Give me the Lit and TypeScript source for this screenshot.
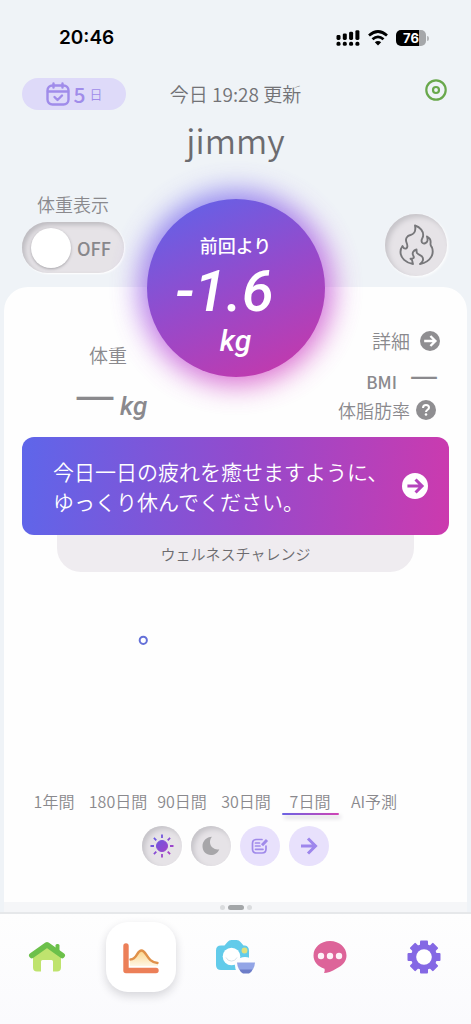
import { LitElement, html, css, svg } from "lit";
import { customElement, state } from "lit/decorators.js";
import { classMap } from "lit/directives/class-map.js";

const arrow = svg`<path d="M5 12h13M12.5 6l6 6-6 6" fill="none" stroke="currentColor" stroke-width="2.8"/>`;

const houseIcon = html`<svg width="38" height="34" viewBox="0 0 38 34" aria-hidden="true">
  <path d="M5 17 19 7l14 10v10.500q0 4-4 4h-4V21.500q0-1.500-1.500-1.500h-9Q13 20 13 21.500v10H9q-4 0-4-4z" fill="#bfe36e"/>
  <path d="M27.500 5.500q0-1.500 1.500-1.500h1q1.500 0 1.500 1.500V13h-4z" fill="#6cc04a"/>
  <path d="M3.800 15.500 19 4.800l15.200 10.700" fill="none" stroke="#6cc04a" stroke-width="5.600" stroke-linecap="round" stroke-linejoin="round"/>
</svg>`;

const chartIcon = html`<svg width="38" height="34" viewBox="0 0 38 34" aria-hidden="true">
  <defs><linearGradient id="hill" x1="0" y1="0" x2="0" y2="1">
    <stop offset="0" stop-color="#fbd488"/><stop offset="1" stop-color="#fff6e4"/>
  </linearGradient></defs>
  <path d="M8 20.500c8 0 6-10 11.500-10s5 12 16.500 12.500V26H8z" fill="url(#hill)"/>
  <path d="M8.500 19.500c7 0 6-9 11-9s5.500 12 16 12.500" fill="none" stroke="#e0914a" stroke-width="2.400" stroke-linecap="round"/>
  <path d="M4 6v24.500h30" fill="none" stroke="#ec7f58" stroke-width="5.400" stroke-linecap="round" stroke-linejoin="round"/>
</svg>`;

const cameraIcon = html`<svg width="40" height="36" viewBox="0 0 40 36" aria-hidden="true">
  <path d="M6 6.500h3.500L12.500 3q1.500-2 4-2h5q2.500 0 4 2l3 3.500h1.500Q34 7 34 12v14q0 5-5 5H6q-5 0-5-5V11.500q0-5 5-5z" fill="#62cbea"/>
  <circle cx="16.500" cy="17.500" r="8.800" fill="#fff"/>
  <path d="M11 18.500a6 6 0 0 0 11 0" fill="none" stroke="#d9e3ea" stroke-width="1"/>
  <circle cx="29.500" cy="11.500" r="2.900" fill="#dfe07e"/>
  <path d="M20 22q10-8 20 0v14H24q-5-5-4-14z" fill="#fdfdfe"/>
  <path d="M22 23.500h18q-.5 7-5.500 10h-7q-5-3-5.500-10z" fill="#93a5e6"/>
  <path d="M24.500 30.500h13q-1 3-3.500 4h-6q-2.500-1-3.500-4z" fill="#6d7dc8"/>
</svg>`;

const chatIcon = html`<svg width="34" height="34" viewBox="0 0 34 34" aria-hidden="true">
  <path d="M17 1C7.500 1 .5 7.500.5 15.500c0 6 4 11 11 13.200.4 1.800.2 3-.5 4.300 3 0 8-1.500 12.500-4.500C30 25.500 33.500 21 33.500 15.500 33.500 7.500 26.500 1 17 1z" fill="#dd6499"/>
  <circle cx="8" cy="16" r="3.200" fill="#fdf3f8"/><circle cx="17" cy="16" r="3.200" fill="#fdf3f8"/><circle cx="26" cy="16" r="3.200" fill="#fdf3f8"/>
</svg>`;

const gearIcon = html`<svg width="34" height="34" viewBox="-17 -17 34 34" aria-hidden="true">
  <g fill="#8468e4">
    ${[0, 45, 90, 135].map(a => svg`<rect x="-4" y="-16.500" width="8" height="33" rx="1" transform="rotate(${a})"/>`)}
    <circle r="13"/>
  </g>
  <circle r="7.800" fill="#fff"/>
</svg>`;

const flameIcon = html`<svg width="37" height="42" viewBox="0 0 37 42" aria-hidden="true">
  <path d="M15 40C8 39 2.500 34 2.500 28c0-2 .5-4 2-6 .8 2 2 3 3.500 2.500 2.500-1 1.500-3.500.5-6C7 15 9 11.500 12.500 11c4-1 5.500-4.500 4.500-9.500C22 3 26 7.500 25 12.500c-.5 2.500-2.500 3.500-1 6 1.500 1.800 5 .8 5.500-2 .2-1.500 0-2.500-.5-4 3 1.500 4 4 3.500 7-.3 1.500.5 2.500 1.500 4C36 29 34 37.500 22 40c3-2 4-5 2-7.500-1.500-1.500-4-2-5-3.500-.5-1-.5-2-.5-3.500-3 1-4.500 3-3.500 5.500.5 1.500 1.500 2 .5 3-1 .8-2 .8-3 .8 3 1 1.500 3.500 2.500 5.200z"
    fill="none" stroke="#77777a" stroke-width="1.900" stroke-linejoin="round" stroke-linecap="round"/>
</svg>`;

const sunIcon = html`<svg width="24" height="24" viewBox="-12 -12 24 24" aria-hidden="true">
  <defs><linearGradient id="sun" gradientUnits="userSpaceOnUse" x1="-11" y1="-11" x2="11" y2="11">
    <stop offset="0" stop-color="#5b5fe8"/><stop offset="1" stop-color="#b53cc0"/>
  </linearGradient></defs>
  <g fill="url(#sun)" stroke="url(#sun)">
    <circle r="5.500"/>
    <path d="M0-11.500.01-8M0 8l.01 3.500M-11.500 0-8 .01M8 0l3.500.01M-8.100-8.100l2.400 2.400M5.700 5.700l2.400 2.400M-8.100 8.100l2.400-2.400M5.700-5.700l2.400-2.400" stroke-width="1.800"/>
  </g>
</svg>`;

const moonIcon = html`<svg width="20" height="20" viewBox="0 0 20 20" aria-hidden="true">
  <path d="M11 .8C8 4 8.500 9 11.500 11.500c2 1.800 4.500 2.300 6.800 1.700C17 17 13.500 19 10 19 5 19 1.500 15 1.500 10.200 1.500 5 5.500 1 11 .8z" fill="#a7a6a9"/>
</svg>`;

const noteIcon = html`<svg width="18" height="18" viewBox="0 0 18 18" aria-hidden="true">
  <g fill="none" stroke="#a08aea" stroke-width="1.700" stroke-linecap="round">
    <path d="M11 2.500H5.500Q1.500 2.500 1.500 6.500v5.500q0 4 4 4h5.500q4 0 4-4V9"/>
    <path d="M4.500 6h4M4.500 9h4.500M4.500 12.300h7.500"/>
    <path d="m11 8.300 5-5.300" stroke-width="3" stroke-linecap="butt"/>
  </g>
</svg>`;

const calendarIcon = html`<svg width="24" height="24" viewBox="0 0 24 24" aria-hidden="true">
  <g fill="none" stroke="#a08cea" stroke-width="2.400" stroke-linecap="round" stroke-linejoin="round">
    <rect x="1.500" y="3.500" width="21" height="19" rx="5"/>
    <path d="M2 9.500h20M7.500 1.500v4M16.500 1.500v4M8.500 15l3 3 4.500-4.500"/>
  </g>
</svg>`;

@customElement("app-root")
export class AppRoot extends LitElement {
  @state() private range = "7日間";
  @state() private shown = false;

  private ranges = ["1年間", "180日間", "90日間", "30日間", "7日間", "AI予測"];
  private tabs = [
    { label: "ホーム", icon: houseIcon },
    { label: "グラフ", icon: chartIcon },
    { label: "食事", icon: cameraIcon },
    { label: "チャット", icon: chatIcon },
    { label: "設定", icon: gearIcon },
  ];

  static styles = css`
    :host {
      display: flex;
      flex-direction: column;
      min-height: 100vh;
      background: #eff3f7;
      color: #8a898d;
      font-family: "Noto Sans CJK JP", "Noto Sans", sans-serif;
      font-weight: 350;
    }
    * { box-sizing: border-box; }
    svg { display: block; flex: none; }
    button { border: 0; padding: 0; background: none; color: inherit; font: inherit; cursor: pointer; }
    h1, p { margin: 0; font-weight: 350; }

    .status { display: flex; align-items: center; justify-content: space-between; height: 76px; padding: 0 42px 0 59px; color: #000; }
    .clock { font: 600 19px/24px Inter, sans-serif; }
    .signals { display: flex; align-items: center; gap: 8px; }
    .battery { display: flex; align-items: center; gap: 1px; }
    .level { width: 30px; height: 16px; border-radius: 5px; background: linear-gradient(90deg, #000 76%, #a5a7aa 76%); color: #fff; font: 700 13px/16px Inter, sans-serif; text-align: center; }
    .cap { width: 2px; height: 5px; border-radius: 0 2px 2px 0; background: #b5b7ba; }

    .top { display: grid; grid-template-columns: 104px 1fr 104px; align-items: center; padding: 2px 22px 0; }
    .days { display: flex; align-items: center; justify-content: center; gap: 4px; height: 32px; border-radius: 16px; background: #dedaf9; color: #a08cea; }
    .count { font-size: 21px; font-weight: 500; line-height: 32px; }
    .unit { font-size: 13px; line-height: 32px; }
    .updated { font-size: 19px; line-height: 32px; text-align: center; white-space: nowrap; color: #727276; }
    .target { justify-self: end; margin: 0 2px 8px 0; }
    .name { font-size: 34px; line-height: 52px; margin-top: 4px; text-align: center; color: #6c6b6f; }

    .controls { display: flex; justify-content: space-between; align-items: flex-end; padding: 22px 24px 0 22px; height: 107px; }
    .display { display: grid; justify-items: center; width: 102px; font-size: 18px; line-height: 24px; }
    .caption { grid-area: 1 / 1; white-space: nowrap; margin-bottom: 6px; }
    .track { grid-area: 2 / 1; appearance: none; margin: 0; width: 102px; height: 51px; padding: 6px 9px; border-radius: 26px; background: #e6e3e7; box-shadow: inset 3px 3px 5px #bdbbc0, 1px 1px 2px #fff; cursor: pointer; }
    .track::before { content: ""; display: block; width: 40px; height: 40px; border-radius: 50%; background: #fff; box-shadow: 0 1px 3px #a5a3a8; }
    .track:checked::before { margin-left: 44px; }
    .word { grid-area: 2 / 1; justify-self: end; align-self: center; padding-right: 13px; font-weight: 500; pointer-events: none; color: #88878b; }
    .word.on { justify-self: start; padding: 0 0 0 14px; }
    .round { display: grid; place-items: center; border-radius: 50%; background: #e6e3e7; box-shadow: inset 3px 3px 5px #c6c4c9, 1px 1px 3px #fff; }
    .flame { width: 62px; height: 62px; margin-bottom: -3px; }

    .card { position: relative; flex: 1; display: flex; flex-direction: column; margin: 14px 4px 0; border-radius: 24px 24px 0 0; background: #fefefe; padding: 0 18px; }
    .orb { position: absolute; top: -88px; left: 50%; width: 178px; height: 178px; transform: translateX(-50%); isolation: isolate; display: flex; flex-direction: column; align-items: center; border-radius: 50%; padding-top: 32px; color: #fff; font-weight: 500; }
    .orb::before { content: ""; position: absolute; inset: -8px; z-index: -2; border-radius: 50%; background: linear-gradient(155deg, #6262f0 10%, #b44adb 55%, #d638b8 90%); filter: blur(14px); opacity: 0.75; }
    .orb::after { content: ""; position: absolute; inset: 0; z-index: -1; border-radius: 50%; background: linear-gradient(155deg, #6262e8 5%, #964acb 50%, #c638aa 95%); }
    .since { font-size: 18px; line-height: 28px; }
    .change, .kg, .small { font-family: Roboto, sans-serif; font-style: italic; font-weight: 500; }
    .change { font-size: 58px; line-height: 64px; padding-right: 22px; }
    .kg { font-size: 30px; line-height: 36px; }

    .facts { display: flex; justify-content: space-between; height: 150px; }
    .weight { display: flex; flex-direction: column; align-items: center; padding: 53px 0 0 53px; font-size: 19px; line-height: 30px; }
    .heading { padding-right: 6px; }
    .reading { display: flex; align-items: flex-start; gap: 5px; margin-top: 18px; }
    .dash, .nodata { font-family: "Noto Sans", sans-serif; font-weight: 400; }
    .dash { font-size: 40px; line-height: 12px; }
    .small { font-size: 26px; line-height: 36px; }
    .body { display: flex; flex-direction: column; align-items: flex-end; padding: 40px 13px 0 0; font-size: 18px; }
    .row { display: flex; align-items: center; gap: 6px; line-height: 28px; }
    .detail { gap: 10px; margin: 0 -4px 13px 0; font-size: 19px; }
    .bmi { gap: 13px; margin-right: -2px; font-size: 17px; font-weight: 500; }
    .nodata { font-size: 28px; line-height: 12px; margin-bottom: 16px; }

    .banner { display: flex; align-items: center; justify-content: space-between; gap: 12px; position: relative; min-height: 98px; padding: 0 21px 0 31px; border-radius: 12px; background: linear-gradient(95deg, #5e66ea, #954acc 52%, #cc3aae); color: #fff; font-size: 21px; line-height: 30px; text-align: left; }
    .challenge { margin: 0 35px; height: 37px; border-radius: 0 0 24px 24px; background: #efecf0; color: #6c6b6f; font-size: 15px; line-height: 37px; text-align: center; }
    .plot { flex: 1; min-height: 120px; width: 100%; }
    .ranges { display: grid; grid-template-columns: repeat(6, 1fr); margin-right: 43px; }
    .range { display: flex; flex-direction: column; align-items: center; font-size: 16px; line-height: 24px; white-space: nowrap; }
    .range::after { content: ""; width: 57px; height: 2px; border-radius: 1px; }
    .range.current::after { background: linear-gradient(90deg, #6b63e4, #d044b4); box-shadow: 2px 3px 4px #ccc9d0; }
    .tools { display: flex; justify-content: center; gap: 9px; padding: 11px 0 36px; }
    .tool { width: 40px; height: 40px; }
    .lilac { background: #e8e1fc; color: #9d86ec; box-shadow: none; }

    .pager { display: flex; align-items: center; justify-content: center; gap: 3px; height: 10px; margin: 0 4px; background: #f5f6f8; }
    .dot { width: 5px; height: 5px; border-radius: 3px; background: #dadcde; }
    .dot.current { width: 16px; background: #a3a6a8; }
    .nav { display: grid; grid-template-columns: repeat(5, 1fr); height: 112px; border-top: 2px solid #e6e8ea; background: linear-gradient(#fefefe, #fafafd); padding-top: 8px; }
    .tab { display: grid; place-items: center; justify-self: center; width: 70px; height: 70px; border-radius: 22px; }
    .tab.current { background: #fff; box-shadow: 0 4px 10px #d6d6da; }
  `;

  render() {
    return html`
      <div class="status">
        <span class="clock">20:46</span>
        <div class="signals">
          <svg width="24" height="16" viewBox="0 0 24 16" aria-hidden="true">
            ${[0, 1, 2, 3].map(i => svg`
              <rect x=${0.5 + i * 6.3} y=${5 - i * 1.6} width="4" height=${5 + i * 1.6} rx="1.400"/>
              <rect x=${0.5 + i * 6.3} y="11.800" width="4" height="4" rx="1.600"/>`)}
          </svg>
          <svg width="20" height="16" viewBox="0 0 20 16" aria-hidden="true">
            <g fill="none" stroke="#000" stroke-width="2.700">
              <path d="M1 5.500q9-8 18 0"/><path d="M4.500 9.300q5.500-5 11 0"/>
            </g>
            <path d="m10 15.500-3.200-3.300q3.200-2.600 6.400 0z"/>
          </svg>
          <div class="battery"><div class="level">76</div><div class="cap"></div></div>
        </div>
      </div>

      <header>
        <div class="top">
          <button class="days">${calendarIcon}<span class="count">5</span><span class="unit">日</span></button>
          <p class="updated">今日 19:28 更新</p>
          <button class="target" aria-label="目標">
            <svg width="22" height="22" viewBox="0 0 22 22" aria-hidden="true">
              <g fill="none" stroke="#69a84c" stroke-width="2.200"><circle cx="11" cy="11" r="9.700"/><circle cx="11" cy="11" r="3"/></g>
            </svg>
          </button>
        </div>
        <h1 class="name">jimmy</h1>
      </header>

      <div class="controls">
        <label class="display">
          <span class="caption">体重表示</span>
          <input class="track" type="checkbox" role="switch" .checked=${this.shown}
            @change=${(e: Event) => (this.shown = (e.target as HTMLInputElement).checked)}>
          <span class=${classMap({ word: true, on: this.shown })}>${this.shown ? "ON" : "OFF"}</span>
        </label>
        <button class="round flame" aria-label="消費カロリー">${flameIcon}</button>
      </div>

      <main class="card">
        <div class="orb">
          <span class="since">前回より</span>
          <span class="change">-1.6</span>
          <span class="kg">kg</span>
        </div>
        <section class="facts">
          <div class="weight">
            <span class="heading">体重</span>
            <div class="reading"><span class="dash">—</span><span class="small">kg</span></div>
          </div>
          <div class="body">
            <button class="row detail">詳細
              <svg width="20" height="20" viewBox="0 0 24 24" aria-hidden="true"><circle cx="12" cy="12" r="12" fill="#8f8e91"/><g color="#fff">${arrow}</g></svg>
            </button>
            <div class="row bmi">BMI <span class="nodata">—</span></div>
            <button class="row">体脂肪率
              <svg width="20" height="20" viewBox="0 0 20 20" aria-hidden="true"><circle cx="10" cy="10" r="10" fill="#8f8e91"/>
                <path d="M7 8q0-3 3-3t3 2.700c0 2-3 2.200-3 4.300" fill="none" stroke="#fff" stroke-width="2"/><circle cx="10" cy="14.500" r="1.300" fill="#fff"/></svg>
            </button>
          </div>
        </section>

        <button class="banner">
          <span>今日一日の疲れを癒せますように、<br>ゆっくり休んでください。</span>
          <svg width="26" height="26" viewBox="0 0 24 24" aria-hidden="true"><circle cx="12" cy="12" r="12" fill="#fff"/><g color="#b543bd">${arrow}</g></svg>
        </button>
        <button class="challenge">ウェルネスチャレンジ</button>

        <svg class="plot" role="img" aria-label="体重の推移">
          <circle cx="28.400%" cy="31.500%" r="3.600" fill="#fff" stroke="#6470d8" stroke-width="2"/>
        </svg>

        <div class="ranges">
          ${this.ranges.map(r => html`<button class=${classMap({ range: true, current: r === this.range })}
            @click=${() => (this.range = r)}>${r}</button>`)}
        </div>
        <div class="tools">
          <button class="round tool" aria-label="朝">${sunIcon}</button>
          <button class="round tool" aria-label="夜">${moonIcon}</button>
          <button class="round tool lilac" aria-label="メモ">${noteIcon}</button>
          <button class="round tool lilac" aria-label="次へ">
            <svg width="24" height="24" viewBox="0 0 24 24" aria-hidden="true">
              <path d="M4 12h14M11 4.500l7.500 7.500-7.500 7.500" fill="none" stroke="currentColor" stroke-width="3"/>
            </svg>
          </button>
        </div>
      </main>

      <div class="pager"><span class="dot"></span><span class="dot current"></span><span class="dot"></span></div>
      <nav class="nav">
        ${this.tabs.map((t, i) => html`<button class=${classMap({ tab: true, current: i === 1 })} aria-label=${t.label}>${t.icon}</button>`)}
      </nav>
    `;
  }
}
